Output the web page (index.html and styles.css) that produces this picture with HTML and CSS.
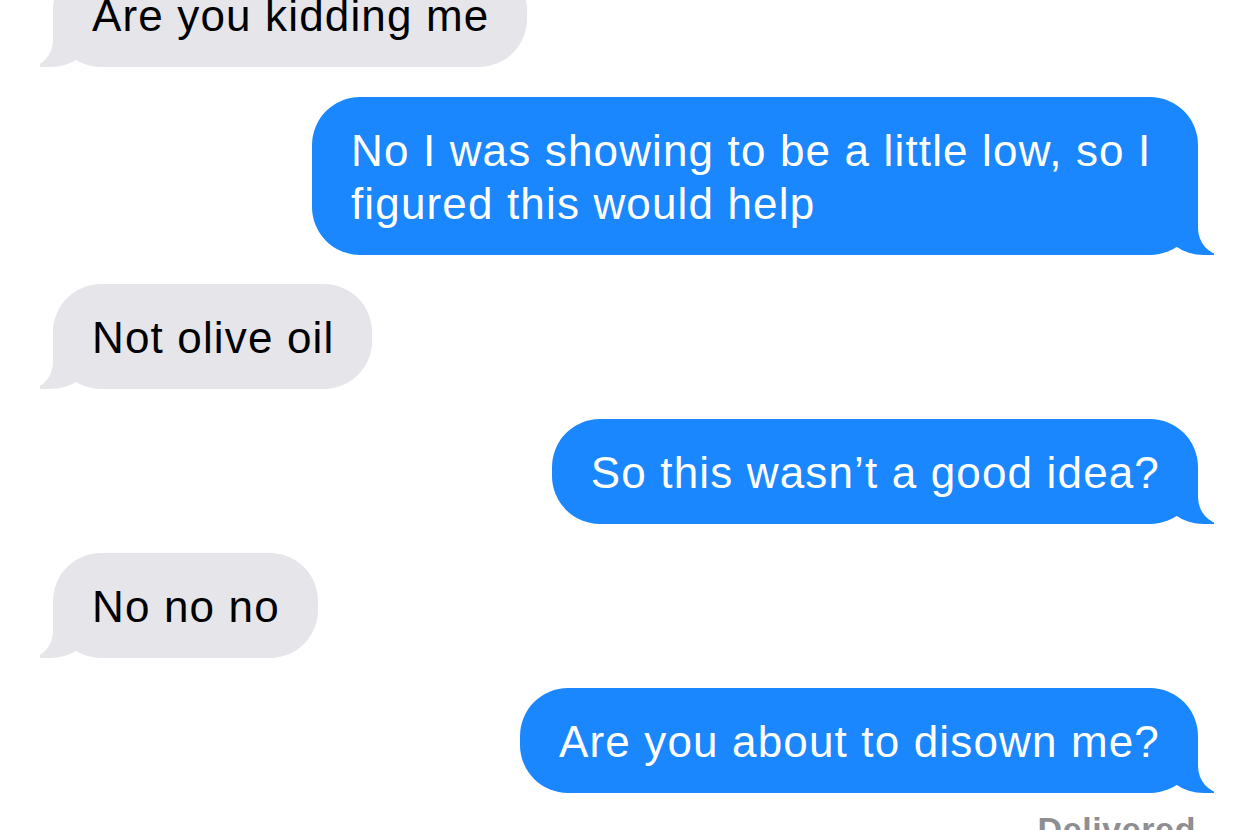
FILE: index.html
```html
<html>
  <head>
    <link rel="stylesheet" href="styles.css">
  </head>
  <body class="body">
    <div class="Thread">
      <div class="Msg Msg--in">Are you kidding me</div>
      <div class="Msg Msg--out">No I was showing to be a little low, so I figured this would help</div>
      <div class="Msg Msg--in">Not olive oil</div>
      <div class="Msg Msg--out">So this wasn’t a good idea?</div>
      <div class="Msg Msg--in">No no no</div>
      <div class="Msg Msg--out">Are you about to disown me?</div>
      <div class="Thread-status">Delivered</div>
    </div>
  </body>
</html>
```

FILE: styles.css
```css
html, body {
  padding: 0;
  margin: 0;
  background: #fff;
  font-family: "Liberation Sans", Helvetica, Arial, sans-serif;
  overflow: hidden;
}

.Thread {
  display: flex;
  flex-direction: column;
  gap: 29.5px;
  margin-top: -38px;
  padding: 0 52px 0 53px;
}

.Msg {
  position: relative;
  box-sizing: border-box;
  max-width: 886px;
  padding: 27px 38px 25px 39px;
  border-radius: 48px;
  font-size: 44px;
  line-height: 53px;
  letter-spacing: 1.15px;
}
.Msg::before,
.Msg::after {
  content: "";
  position: absolute;
  bottom: 0;
  height: 50px;
}

.Msg--in {
  align-self: flex-start;
  background: #e5e5ea;
  color: #000;
}
.Msg--in::before {
  left: -13px;
  width: 50px;
  background: #e5e5ea;
  border-bottom-right-radius: 40px 30px;
}
.Msg--in::after {
  left: -60px;
  width: 60px;
  background: #fff;
  border-bottom-right-radius: 24px 27px;
}

.Msg--out {
  align-self: flex-end;
  background: #1a87fe;
  color: #fff;
}
.Msg--out::before {
  right: -16px;
  width: 50px;
  background: #1a87fe;
  border-bottom-left-radius: 40px 30px;
}
.Msg--out::after {
  right: -60px;
  width: 60px;
  background: #fff;
  border-bottom-left-radius: 24px 27px;
}

.Thread-status {
  align-self: flex-end;
  margin-top: -13px;
  padding-right: 2px;
  font-size: 34px;
  line-height: 40px;
  font-weight: bold;
  letter-spacing: 0.6px;
  color: #8e8e93;
}
```
